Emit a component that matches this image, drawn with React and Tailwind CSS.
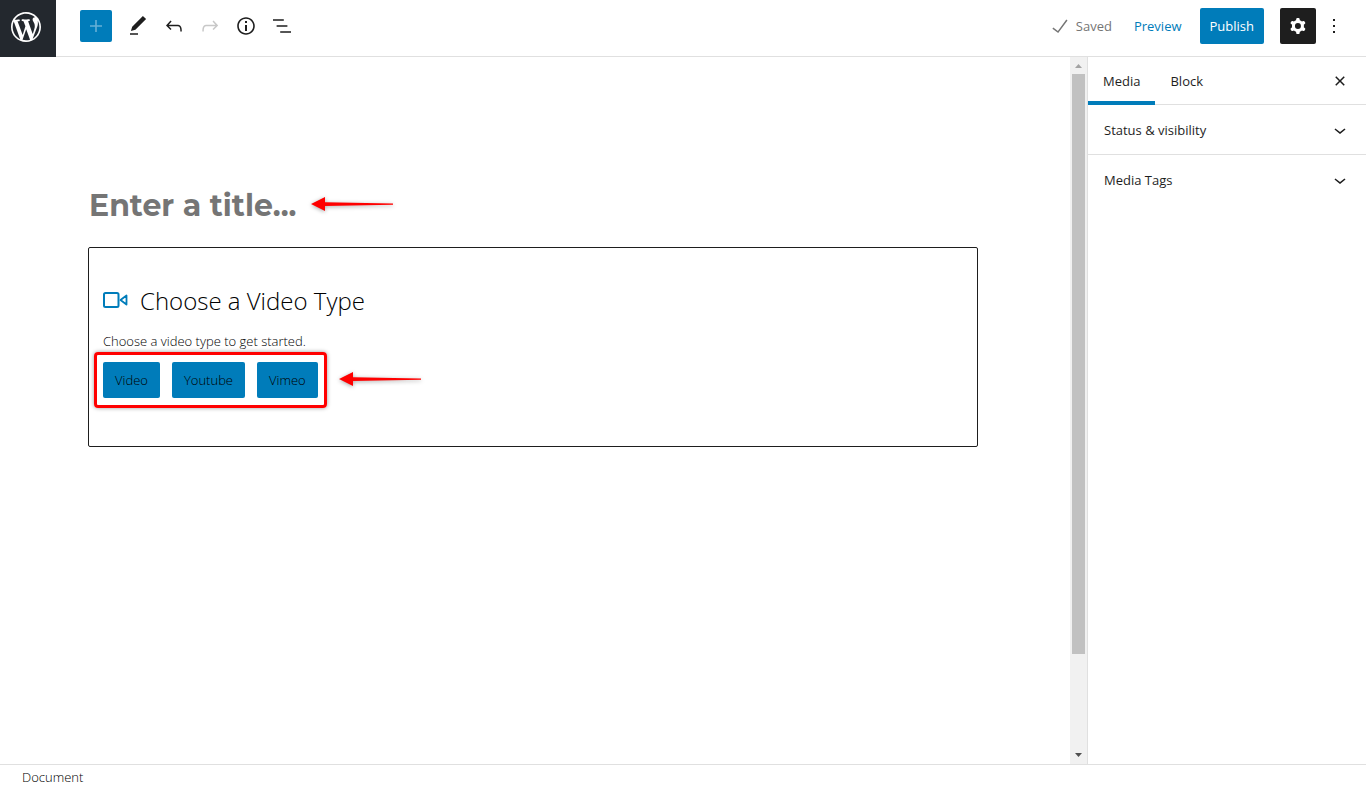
/**
 * App.jsx — Media editor screen: toolbar, canvas, settings sidebar, footer
 */

const PATHS = {
  plus: 'M18 11.2h-5.2V6h-1.6v5.2H6v1.6h5.2V18h1.6v-5.2H18z',
  edit: 'M20.1 5.1L16.9 2 6.2 12.7l-1.3 4.4 4.5-1.3L20.1 5.1zM4 20.8h8v-1.5H4v1.5z',
  undo: 'M18.3 11.7c-.6-.6-1.4-.9-2.3-.9H6.7l2.9-3.3-1.1-1-4.5 5L8.5 16l1-1-2.7-2.7H16c.5 0 .9.2 1.3.5 1 1 1 3.4 1 4.5v.3h1.5v-.2c0-1.5 0-4.3-1.5-5.7z',
  redo: 'M15.6 6.5l-1.1 1 2.9 3.3H8c-.9 0-1.7.3-2.3.9-1.4 1.5-1.4 4.2-1.4 5.6v.2h1.5v-.3c0-1.1 0-3.5 1-4.5.3-.3.7-.5 1.3-.5h9.2L14.5 15l1.1 1.1 4.6-4.6-4.6-5z',
  info: 'M12 3.2c-4.8 0-8.8 3.9-8.8 8.8 0 4.8 3.9 8.8 8.8 8.8 4.8 0 8.8-3.9 8.8-8.8 0-4.8-4-8.8-8.8-8.8zm0 16c-4 0-7.2-3.3-7.2-7.2C4.8 8 8 4.8 12 4.8s7.2 3.3 7.2 7.2c0 4-3.2 7.2-7.2 7.2zM11 17h2v-6h-2v6zm0-8h2V7h-2v2z',
  list: 'M13.8 5.2H3v1.5h10.8V5.2zm-3.6 12v1.5H21v-1.5H10.2zm7.2-6H6.6v1.5h10.8v-1.5z',
  check: 'M18.3 5.6L9.9 16.9l-4.6-3.4-.9 1.2 5.8 4.3 9.3-12.6z',
  cog: 'M10.289 4.836A1 1 0 0111.275 4h1.306a1 1 0 01.987.836l.244 1.466c.787.26 1.503.679 2.108 1.218l1.393-.522a1 1 0 011.216.437l.653 1.13a1 1 0 01-.23 1.273l-1.148.944a6.025 6.025 0 010 2.435l1.149.946a1 1 0 01.23 1.272l-.653 1.13a1 1 0 01-1.216.437l-1.394-.522c-.605.54-1.32.958-2.108 1.218l-.244 1.466a1 1 0 01-.987.836h-1.306a1 1 0 01-.986-.836l-.244-1.466a5.995 5.995 0 01-2.108-1.218l-1.394.522a1 1 0 01-1.217-.436l-.653-1.131a1 1 0 01.23-1.272l1.149-.946a6.026 6.026 0 010-2.435l-1.148-.944a1 1 0 01-.23-1.272l.653-1.131a1 1 0 011.217-.437l1.393.522a5.994 5.994 0 012.108-1.218l.244-1.466zM14.929 12a3 3 0 11-6 0 3 3 0 016 0z',
  more: 'M13 19h-2v-2h2v2zm0-6h-2v-2h2v2zm0-6h-2V5h2v2z',
  close: 'M12 13.06l3.712 3.713 1.061-1.06L13.061 12l3.712-3.712-1.06-1.06L12 10.938 8.288 7.227l-1.061 1.06L10.939 12l-3.712 3.712 1.06 1.061L12 13.061z',
  chevron: 'M17.5 11.6L12 16l-5.5-4.4.9-1.2L12 14l4.5-3.6 1 1.2z',
}

const TOOLS = [
  { icon: 'edit', label: 'Tools' },
  { icon: 'undo', label: 'Undo' },
  { icon: 'redo', label: 'Redo', disabled: true },
  { icon: 'info', label: 'Details' },
  { icon: 'list', label: 'List view' },
]

const VIDEO_TYPES = ['Video', 'Youtube', 'Vimeo']
const PANELS = ['Status & visibility', 'Media Tags']

function Icon({ name, className = 'size-6' }) {
  return (
    <svg viewBox="0 0 24 24" className={`shrink-0 ${className}`} fill="currentColor" fillRule="evenodd" aria-hidden="true">
      <path d={PATHS[name]} />
    </svg>
  )
}

function WordPressLogo() {
  return (
    <svg viewBox="-2 -2 24 24" className="size-9" fill="currentColor" aria-hidden="true">
      <path d="M20 10c0-5.51-4.49-10-10-10C4.48 0 0 4.49 0 10c0 5.52 4.48 10 10 10 5.51 0 10-4.48 10-10zM7.78 15.37L4.37 6.22c.55-.02 1.17-.08 1.17-.08.5-.06.44-1.13-.06-1.11 0 0-1.45.11-2.37.11-.18 0-.37 0-.58-.01C4.12 2.69 6.87 1.11 10 1.11c2.33 0 4.45.87 6.05 2.34-.68-.11-1.65.39-1.65 1.58 0 .74.45 1.36.9 2.1.35.61.55 1.36.55 2.46 0 1.49-1.4 5-1.4 5l-3.03-8.37c.54-.02.82-.17.82-.17.5-.05.44-1.25-.06-1.22 0 0-1.44.12-2.38.12-.87 0-2.33-.12-2.33-.12-.5-.03-.56 1.2-.06 1.22l.92.08 1.26 3.41zM17.41 10c.24-.64.74-1.87.43-4.25.7 1.29 1.05 2.71 1.05 4.25 0 3.29-1.73 6.24-4.4 7.78.97-2.59 1.94-5.2 2.92-7.78zM6.1 18.09C3.12 16.65 1.11 13.53 1.11 10c0-1.3.23-2.48.72-3.59C3.25 10.3 4.67 14.2 6.1 18.09zm4.03-6.63l2.58 6.98c-.86.29-1.76.45-2.71.45-.79 0-1.57-.11-2.29-.33.81-2.38 1.62-4.74 2.42-7.1z" />
    </svg>
  )
}

// Tapered red pointer used by the on-screen hints
function Arrow({ className }) {
  return (
    <svg viewBox="0 0 84 16" className={`absolute h-4 w-[84px] drop-shadow-[0_1px_2px_rgba(0,0,0,0.35)] ${className}`} fill="#ff0000" aria-hidden="true">
      <path d="M1 8L15 1v5.300L83 7.500v1.200L15 10v5z" />
    </svg>
  )
}

function Header() {
  return (
    <header className="flex h-[57px] shrink-0 items-start border-b border-[#e0e0e0]">
      <a href="#" aria-label="View media" className="flex h-[57px] w-14 items-center bg-[#23282e] pr-1 pb-1 pl-2 text-white">
        <WordPressLogo />
      </a>
      <div className="flex items-center gap-[14px] pt-[10px] pl-6">
        <button aria-label="Add block" className="flex size-8 items-center justify-center rounded-xs bg-[#007cba] text-[#66b0d6]">
          <Icon name="plus" />
        </button>
        <div className="flex gap-3">
          {TOOLS.map(({ icon, label, disabled }) => (
            <button key={icon} aria-label={label} disabled={disabled} className="disabled:text-[#c8c8c8]">
              <Icon name={icon} />
            </button>
          ))}
        </div>
      </div>
      <div className="ml-auto flex items-center pt-2 pr-5">
        <span className="flex items-center gap-1 text-[#757575]">
          <Icon name="check" />
          <span className="pt-0.5">Saved</span>
        </span>
        <a href="#" className="ml-[22px] pt-0.5 text-[#007cba]">Preview</a>
        <button className="ml-[18px] h-9 rounded-xs bg-[#007cba] px-[10px] pt-0.5 text-white">Publish</button>
        <button aria-label="Settings" className="ml-4 flex size-9 items-center justify-center rounded-xs bg-[#1e1e1e] text-white">
          <Icon name="cog" />
        </button>
        <button aria-label="Options" className="ml-[6px]">
          <Icon name="more" />
        </button>
      </div>
    </header>
  )
}

function VideoTypeBlock() {
  return (
    <section className="mt-[18px] rounded-xs border border-[#1e1e1e] px-[14px] pt-[35px] pb-12 font-light text-black">
      <h2 className="flex items-center gap-3 text-2xl leading-9">
        <svg viewBox="0 0 25 18" className="h-[18px] w-[25px]" fill="none" stroke="#007cba" strokeWidth="2" strokeLinejoin="round" aria-hidden="true">
          <rect x="1" y="1" width="14.500" height="14" rx="1.500" />
          <path d="M17.500 8l6-4.500v9z" strokeWidth="1.800" />
        </svg>
        Choose a Video Type
      </h2>
      <p className="mt-3 leading-5">Choose a video type to get started.</p>
      <div className="relative mt-[11px] flex w-fit gap-3">
        {VIDEO_TYPES.map((type) => (
          <button key={type} className="h-9 rounded-xs bg-[#007cba] px-3 pt-0.5">{type}</button>
        ))}
        <div className="pointer-events-none absolute -inset-x-[9px] -inset-y-[10px] rounded-[4px] border-3 border-[#ff0000] shadow-[0_0_4px_rgba(0,0,0,0.4)]" />
        <Arrow className="top-[9px] left-full ml-5" />
      </div>
    </section>
  )
}

function Scrollbar() {
  return (
    <div className="flex w-[17px] shrink-0 flex-col items-center bg-[#f1f1f1]" aria-hidden="true">
      <svg viewBox="0 0 17 17" className="size-[17px] shrink-0" fill="#a3a3a3"><path d="M5 11l3.500-4 3.500 4z" /></svg>
      <div className="h-[82%] w-[13px] bg-[#c1c1c1]" />
      <svg viewBox="0 0 17 17" className="mt-auto size-[17px] shrink-0" fill="#505050"><path d="M5 6h7L8.500 10z" /></svg>
    </div>
  )
}

function Sidebar() {
  return (
    <aside className="w-[279px] shrink-0 border-l border-[#e0e0e0]">
      <div className="flex h-12 items-stretch border-b border-[#e0e0e0]">
        <button className="-mb-px border-b-4 border-[#007cba] px-[15px] pt-1.5">Media</button>
        <button className="px-[15px] pt-0.5">Block</button>
        <button aria-label="Close settings" className="mr-[14px] ml-auto">
          <Icon name="close" />
        </button>
      </div>
      {PANELS.map((panel) => (
        <button key={panel} className="flex h-[50px] w-full items-center justify-between border-b border-[#e0e0e0] pr-[14px] pl-4 last:border-b-0">
          <span className="pt-0.5">{panel}</span>
          <Icon name="chevron" />
        </button>
      ))}
    </aside>
  )
}

export default function App() {
  return (
    <div className="flex h-screen flex-col bg-white font-['Segoe_UI','Open_Sans',sans-serif] text-[13px] text-[#1e1e1e]">
      <Header />
      <div className="flex min-h-0 flex-1">
        <main className="min-w-0 flex-1 pt-[124px] pr-[92px] pl-[88px]">
          <div className="relative">
            <input
              aria-label="Title"
              placeholder="Enter a title..."
              className="block h-12 w-full px-px font-[Montserrat,Inter,sans-serif] text-[30px] font-bold outline-none placeholder:text-[#757575]"
            />
            <Arrow className="top-[15px] left-[222px]" />
          </div>
          <VideoTypeBlock />
        </main>
        <Scrollbar />
        <Sidebar />
      </div>
      <footer className="h-[22px] shrink-0 border-t border-[#e0e0e0] px-[22px] leading-6 font-light text-black">Document</footer>
    </div>
  )
}
